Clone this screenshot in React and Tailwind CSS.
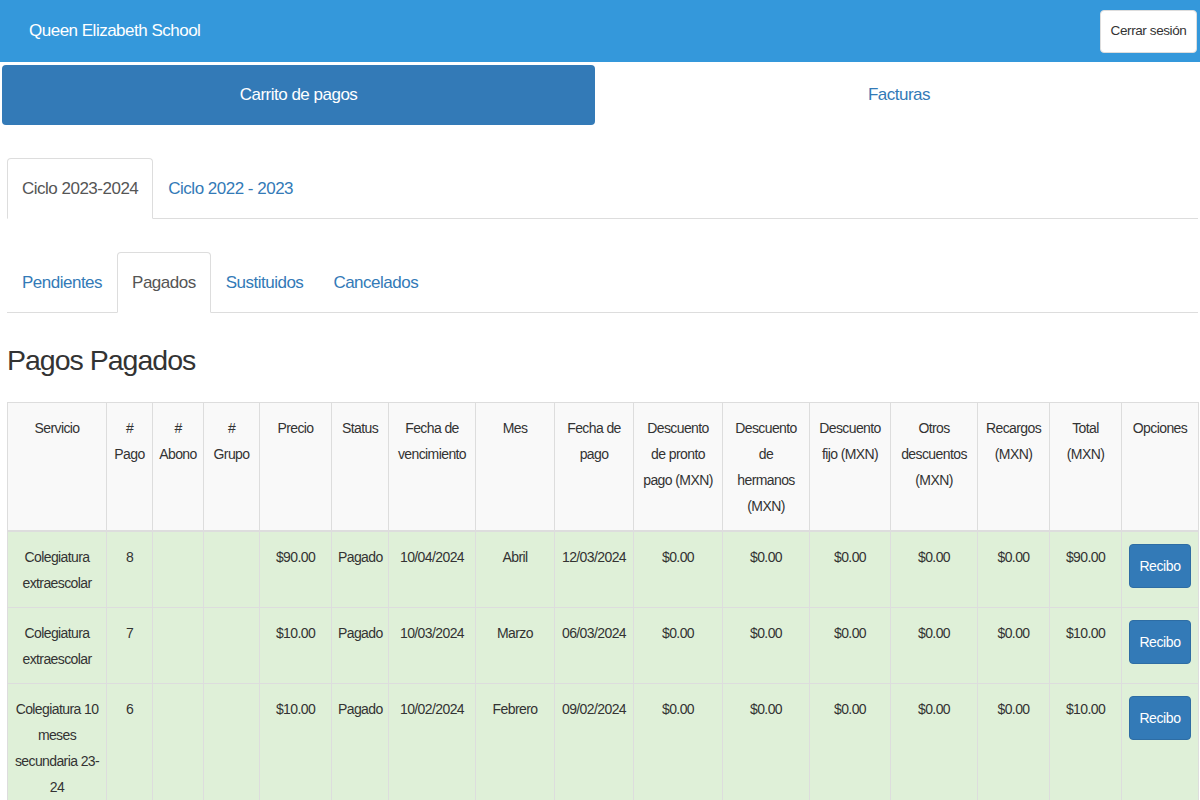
import React from "react";

const cols = [99, 46, 51, 56, 72, 57, 87, 79, 79, 89, 87, 81, 87, 72, 72, 77];

const headers = [
  ["Servicio"],
  ["#", "Pago"],
  ["#", "Abono"],
  ["#", "Grupo"],
  ["Precio"],
  ["Status"],
  ["Fecha de", "vencimiento"],
  ["Mes"],
  ["Fecha de", "pago"],
  ["Descuento", "de pronto", "pago (MXN)"],
  ["Descuento", "de", "hermanos", "(MXN)"],
  ["Descuento", "fijo (MXN)"],
  ["Otros", "descuentos", "(MXN)"],
  ["Recargos", "(MXN)"],
  ["Total", "(MXN)"],
  ["Opciones"],
];

const rows = [
  {
    servicio: ["Colegiatura", "extraescolar"],
    pago: "8",
    precio: "$90.00",
    vence: "10/04/2024",
    mes: "Abril",
    fecha: "12/03/2024",
    total: "$90.00",
  },
  {
    servicio: ["Colegiatura", "extraescolar"],
    pago: "7",
    precio: "$10.00",
    vence: "10/03/2024",
    mes: "Marzo",
    fecha: "06/03/2024",
    total: "$10.00",
  },
  {
    servicio: ["Colegiatura 10", "meses", "secundaria 23-", "24"],
    pago: "6",
    precio: "$10.00",
    vence: "10/02/2024",
    mes: "Febrero",
    fecha: "09/02/2024",
    total: "$10.00",
  },
];

function Lines({ lines }) {
  return lines.map((l, i) => (
    <div key={i} className="whitespace-nowrap">
      {l}
    </div>
  ));
}

function Tabs({ items, active, className }) {
  return (
    <ul className={"flex border-b border-[#ddd] " + className}>
      {items.map((t) => (
        <li key={t} className="-mb-px">
          <a
            className={
              "flex h-[61px] items-center px-[14px] text-[17px] tracking-[-0.5px] rounded-t-[4px] border " +
              (t === active
                ? "border-[#ddd] border-b-white bg-white text-[#555]"
                : "border-transparent text-[#337ab7]")
            }
          >
            {t}
          </a>
        </li>
      ))}
    </ul>
  );
}

export default function App() {
  const td = "border border-[#ddd] pt-[12px] pb-[11px] px-[6px] align-top text-center";
  return (
    <div className="min-h-[800px] bg-white font-['Liberation_Sans',Arial,sans-serif] text-[#333]">
      <div className="flex h-[62px] items-center justify-between bg-[#3498db] pl-[29px] pr-[3px]">
        <span className="text-[17px] tracking-[-0.5px] text-white">Queen Elizabeth School</span>
        <button className="h-[43px] w-[97px] rounded-[4px] border border-[#ddd] bg-white text-[13.5px] tracking-[-0.4px] text-[#333]">
          Cerrar sesión
        </button>
      </div>

      <div className="mt-[3px] flex gap-[5px] px-[2px]">
        <a className="flex h-[60px] w-[593px] items-center justify-center rounded-[4px] bg-[#337ab7] text-[17px] tracking-[-0.5px] text-white">
          Carrito de pagos
        </a>
        <a className="flex h-[60px] flex-1 items-center justify-center text-[17px] tracking-[-0.5px] text-[#337ab7]">
          Facturas
        </a>
      </div>

      <div className="pl-[7px] pr-[2px]">
        <Tabs
          className="mt-[33px]"
          items={["Ciclo 2023-2024", "Ciclo 2022 - 2023"]}
          active="Ciclo 2023-2024"
        />
        <Tabs
          className="mt-[33px]"
          items={["Pendientes", "Pagados", "Sustituidos", "Cancelados"]}
          active="Pagados"
        />

        <h1 className="mt-[25px] mb-[19px] text-[28.5px] tracking-[-1px] leading-[45px]">Pagos Pagados</h1>

        <table className="w-[1191px] table-fixed border-collapse text-[14px] tracking-[-0.6px] leading-[26px]">
          <colgroup>
            {cols.map((w, i) => (
              <col key={i} style={{ width: w }} />
            ))}
          </colgroup>
          <thead>
            <tr className="bg-[#f9f9f9]">
              {headers.map((h, i) => (
                <th key={i} className={td + " font-normal border-b-2"}>
                  <Lines lines={h} />
                </th>
              ))}
            </tr>
          </thead>
          <tbody>
            {rows.map((r, i) => (
              <tr key={i} className="bg-[#dff0d8]">
                <td className={td}>
                  <Lines lines={r.servicio} />
                </td>
                <td className={td}>{r.pago}</td>
                <td className={td}></td>
                <td className={td}></td>
                <td className={td}>{r.precio}</td>
                <td className={td}>Pagado</td>
                <td className={td}>{r.vence}</td>
                <td className={td}>{r.mes}</td>
                <td className={td}>{r.fecha}</td>
                <td className={td}>$0.00</td>
                <td className={td}>$0.00</td>
                <td className={td}>$0.00</td>
                <td className={td}>$0.00</td>
                <td className={td}>$0.00</td>
                <td className={td}>{r.total}</td>
                <td className={td}>
                  <button className="h-[44px] w-[62px] rounded-[4px] border border-[#2e6da4] bg-[#337ab7] text-[14px] tracking-[-0.4px] text-white">
                    Recibo
                  </button>
                </td>
              </tr>
            ))}
          </tbody>
        </table>
      </div>
    </div>
  );
}
